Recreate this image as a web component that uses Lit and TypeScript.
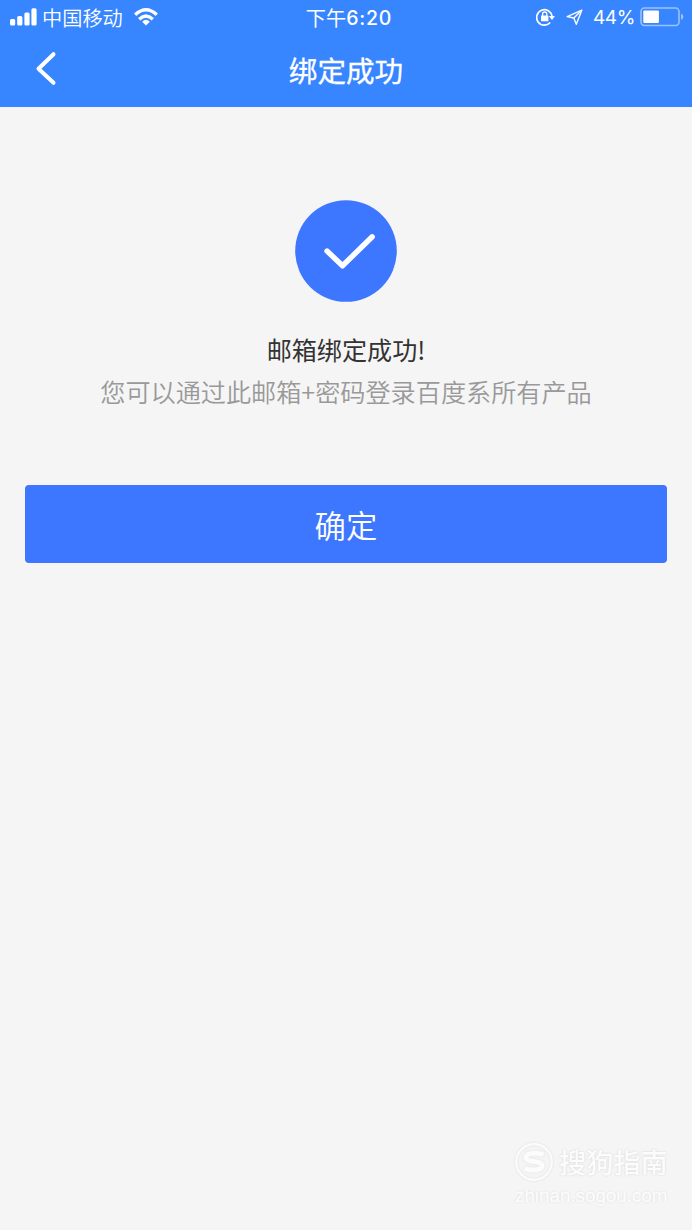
import { LitElement, html, css } from "lit";
import { customElement } from "lit/decorators.js";

@customElement("status-bar")
class StatusBar extends LitElement {
  static styles = css`
    :host { display: grid; grid-template-columns: 1fr auto 1fr; grid-template-rows: 34px; height: 34px; align-items: center; box-sizing: border-box; padding: 0 8px 0 10px; color: #fff; }
    .side { display: flex; align-items: center; height: 34px; }
    .right { justify-content: flex-end; }
    svg { display: block; flex: none; }
    .carrier { font-size: 20.2px; line-height: 32px; font-weight: 350; margin: 0 11px 0 5px; padding-top: 2px; }
    .time { display: flex; align-items: center; font-size: 20.2px; line-height: 32px; margin-left: 4px; padding-top: 2px; }
    .digits { font-family: Inter, sans-serif; font-weight: 500; font-size: 19.5px; letter-spacing: 0.8px; }
    .percent { font-family: Inter, sans-serif; font-size: 19px; line-height: 32px; letter-spacing: -0.4px; margin: 0 5px 0 10px; padding-top: 2px; }
    .arrow { margin-left: 11px; }
  `;
  render() {
    return html`
      <div class="side">
        <svg width="27" height="18" viewBox="0 0 27 18" fill="#fff">
          <rect x="0" y="11" width="5.2" height="6.5" rx="1.5" />
          <rect x="7.2" y="8" width="5.2" height="9.5" rx="1.5" />
          <rect x="14.4" y="4.5" width="5.2" height="13" rx="1.5" />
          <rect x="21.4" y="0.2" width="5.2" height="17.3" rx="1.5" />
        </svg>
        <span class="carrier">中国移动</span>
        <svg width="24" height="18" viewBox="0 0 24 18" fill="none" stroke="#fff" stroke-width="3.3">
          <path d="M1.2 6.8Q12-3.2 22.8 6.8" />
          <path d="M5.2 11.2Q12 4.9 18.8 11.2" />
          <path d="M8.2 13.7Q12 10 15.8 13.7L12 17.5Z" fill="#fff" stroke="none" />
        </svg>
      </div>
      <div class="time"><span>下午</span><span class="digits">6:20</span></div>
      <div class="side right">
        <svg width="19" height="18" viewBox="0 0 19 18" fill="none" stroke="#fff" stroke-width="1.7">
          <path d="M14.2 14.5A7.7 7.7 0 1 1 16 8.4" />
          <path d="M12.8 8H19L16 12Z" fill="#fff" stroke="none" />
          <rect x="5" y="7.6" width="7.4" height="5.6" rx=".5" fill="#fff" stroke="none" />
          <path d="M6.6 8V6.1A2.1 2.1 0 0 1 10.8 6.1V8" stroke-width="1.3" />
        </svg>
        <svg class="arrow" width="17" height="17" viewBox="0 0 17 17" fill="none" stroke="#fff" stroke-width="1.4" stroke-linejoin="round">
          <path d="M15.8 1.2L1.2 7.6L7.8 9L10.3 15.3Z" /><path d="M7.8 9L15.8 1.2" />
        </svg>
        <span class="percent">44%</span>
        <svg width="44" height="20" viewBox="0 0 44 20">
          <rect x="1" y="1" width="38" height="17.5" rx="3.5" fill="none" stroke="#fff" stroke-opacity=".5" stroke-width="1.6" />
          <rect x="3.3" y="3.6" width="15.6" height="12.4" rx="1" fill="#fff" />
          <path d="M41 6.8Q43.3 7.5 43.3 9.8T41 12.8Z" fill="#fff" fill-opacity=".5" />
        </svg>
      </div>
    `;
  }
}

@customElement("site-watermark")
class SiteWatermark extends LitElement {
  static styles = css`
    :host { display: block; width: 156px; color: #fcfcfc; text-shadow: 0 0 2px #cfcfcf; }
    .brand { display: flex; align-items: center; gap: 5px; height: 40px; font-size: 27.2px; line-height: 37px; font-weight: 500; white-space: nowrap; }
    .name { padding-bottom: 3px; }
    .domain { font-family: "Liberation Sans", sans-serif; font-size: 18.8px; line-height: 26px; padding-left: 1px; white-space: nowrap; -webkit-text-stroke: 0.4px #fcfcfc; }
    svg { display: block; flex: none; filter: drop-shadow(0 0 1px #dedede); }
  `;
  render() {
    return html`
      <div class="brand">
        <svg width="40" height="40" viewBox="0 0 40 40" fill="none" stroke="#fcfcfc">
          <circle cx="20" cy="19" r="17.8" stroke-width="2.2" />
          <path d="M29.5 11.5C22 9 12 10 12 14.5C12 19.5 28 17.5 28 22.5C28 27.5 18 28 10.5 25.5" stroke-width="5" />
        </svg>
        <span class="name">搜狗指南</span>
      </div>
      <div class="domain">zhinan.sogou.com</div>
    `;
  }
}

@customElement("app-root")
class AppRoot extends LitElement {
  static styles = css`
    :host { display: flex; flex-direction: column; height: 1230px; background: #f5f5f5; font-family: "Noto Sans CJK SC", sans-serif; overflow: hidden; }
    header { background: #3785ff; height: 107px; flex: none; }
    nav { display: grid; grid-template-columns: 60px 1fr 60px; height: 73px; align-items: center; }
    .back { padding: 0; margin: 0; border: 0; background: none; height: 73px; }
    svg { display: block; }
    h1 { margin: 0; text-align: center; color: #fff; font-size: 28.6px; line-height: 72px; height: 73px; font-weight: 400; -webkit-text-stroke: 0.3px #fff; }
    main { display: flex; flex-direction: column; align-items: center; flex: 1; padding: 93px 25px 0; }
    .headline { margin: 26px 0 0; color: #333; font-size: 25.1px; line-height: 42px; }
    .detail { margin: 0; color: #999; font-size: 25.15px; line-height: 42px; font-weight: 350; white-space: nowrap; }
    .confirm { margin-top: 73px; width: 100%; height: 78px; border: 0; padding: 2px 0 0; border-radius: 4px; background: #3d77ff; color: #fff; font: 350 31.4px/76px "Noto Sans CJK SC", sans-serif; }
    footer { display: flex; justify-content: flex-end; padding: 0 22px 21px 0; }
  `;
  render() {
    return html`
      <header>
        <status-bar></status-bar>
        <nav>
          <button class="back" aria-label="返回">
            <svg width="60" height="73" viewBox="0 0 60 73" fill="none" stroke="#fff" stroke-width="4" stroke-linecap="round" stroke-linejoin="round"><path d="M53.5 20.2L38.5 34.8L53.5 48.8" /></svg>
          </button>
          <h1>绑定成功</h1>
        </nav>
      </header>
      <main>
        <svg width="102" height="102" viewBox="0 0 102 102">
          <circle cx="51" cy="51" r="50.8" fill="#3d77ff" />
          <path d="M32 51L47.5 65.8L77.2 36.8" fill="none" stroke="#fff" stroke-width="5.4" stroke-linecap="round" stroke-linejoin="round" />
        </svg>
        <p class="headline">邮箱绑定成功!</p>
        <p class="detail">您可以通过此邮箱+密码登录百度系所有产品</p>
        <button class="confirm">确定</button>
      </main>
      <footer><site-watermark></site-watermark></footer>
    `;
  }
}
